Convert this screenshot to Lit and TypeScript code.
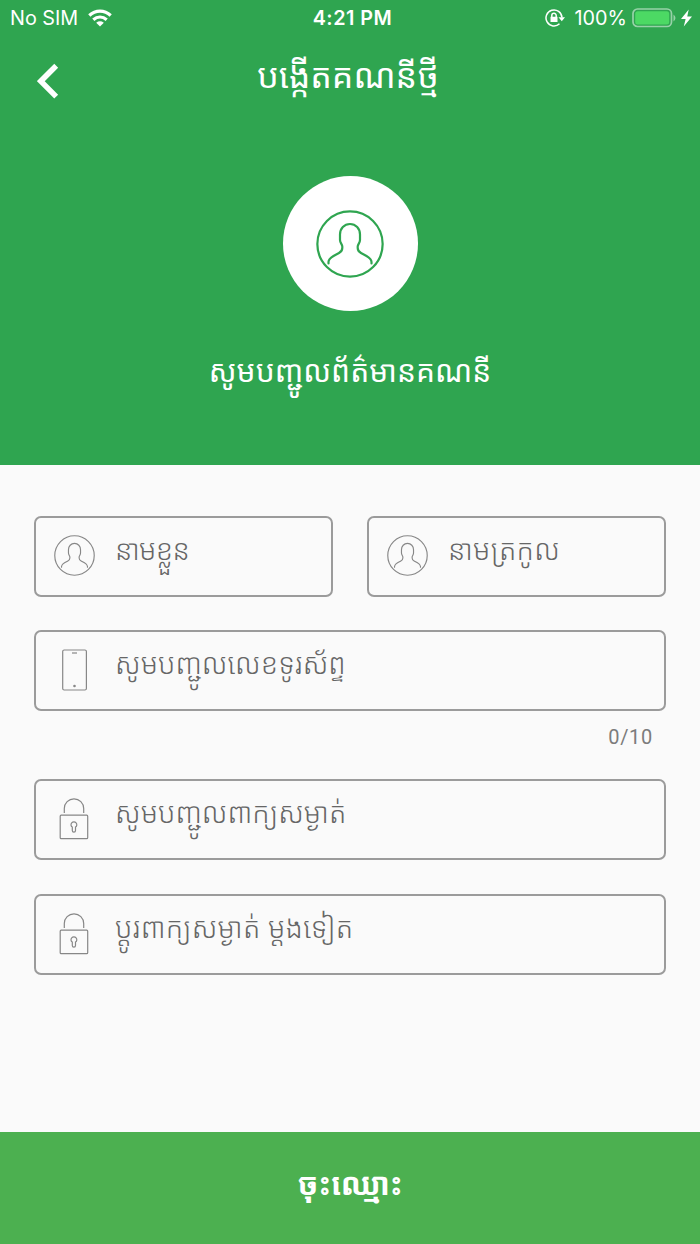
import { LitElement, html, css, svg } from "lit";
import { customElement, property } from "lit/decorators.js";

const person = (w: number) => svg`
  <circle cx="34" cy="34" r="${33.2 - w / 4}" stroke-width="${w}"></circle>
  <path stroke-width="${w}" stroke-linecap="round" d="M12.500 53.500V52C12.500 49 15 47.500 17.500 46L23 43C25.300 41.700 26.300 40.500 26.300 38V36.500C26.300 34.500 24 33 24 30V24.500C24 18.500 28.200 14 34 14S44 18.500 44 24.500V30C44 33 41.700 34.500 41.700 36.500V38C41.700 40.500 42.700 41.700 45 43L50.500 46C53 47.500 55.500 49 55.500 52V53.500"></path>`;

@customElement("field-box")
class FieldBox extends LitElement {
  @property() icon = "person";
  @property() text = "";
  static styles = css`
    :host { display: flex; box-sizing: border-box; height: 81px; border: 2px solid #9b9b9b; border-radius: 7px; flex: 1; min-width: 0; }
    .icon { width: 41px; height: 41px; margin: 17px 20px 0 18px; flex: none; fill: none; stroke: #878787; overflow: visible; }
    .text { color: #666; font: 300 28.3px/40px "Noto Sans Khmer", "Khmer OS", "Noto Sans", sans-serif; padding-top: 11px; white-space: nowrap; }
    :host(.tight) .text { letter-spacing: -.7px; }
    :host(.wide) .text { letter-spacing: .2px; }
  `;
  glyph() {
    if (this.icon === "person") return html`<svg class="icon" viewBox="0 0 68 68">${person(1.9)}</svg>`;
    if (this.icon === "phone")
      return html`<svg class="icon" viewBox="0 0 41 41" stroke-width="1.200">
        <rect x="8.700" y="1" width="23.700" height="40" rx="1.500"></rect>
        <path d="M18 4h5"></path><circle cx="20.500" cy="37" r=".7" fill="#878787"></circle>
      </svg>`;
    return html`<svg class="icon" viewBox="0 0 41 41" stroke-width="1.200">
      <rect x="6.200" y="17.200" width="27.500" height="23.500" rx="1"></rect>
      <path d="M10.300 15V10.500a9.700 9.700 0 0 1 19.400 0V15"></path>
      <path d="M18.300 29.100a2.900 2.900 0 1 1 3.200 0V32.500a1.600 1.600 0 0 1-3.200 0z"></path>
    </svg>`;
  }
  render() {
    return html`${this.glyph()}<div class="text">${this.text}</div>`;
  }
}

@customElement("app-root")
class AppRoot extends LitElement {
  static styles = css`
    :host { display: flex; flex-direction: column; width: 700px; height: 1244px; background: #fafafa; overflow: hidden; font-family: "Noto Sans Khmer", "Khmer OS", "Noto Sans", sans-serif; }
    .header { height: 465px; background: #2fa550; color: #fff; display: flex; flex-direction: column; align-items: center; flex: none; }
    .status { width: 100%; height: 36px; box-sizing: border-box; padding: 0 8px 0 10px; display: grid; grid-template-columns: 1fr auto 1fr; align-items: center; font: 19.8px/36px Inter, sans-serif; }
    .left, .right { display: flex; align-items: center; }
    .right { justify-content: flex-end; }
    .wifi { margin: -1px 0 0 10px; }
    .time { font-weight: 600; letter-spacing: .5px; padding-left: 3px; }
    .lock { margin-right: 10px; }
    .battery { margin-left: 5px; }
    .bolt { margin-left: 5px; }
    .nav { width: 100%; height: 90px; display: grid; grid-template-columns: 100px 1fr 100px; }
    .back { margin: 27px 0 0 37px; }
    .title { text-align: center; font-size: 34px; line-height: 48px; padding: 15px 4px 0 0; white-space: nowrap; }
    .avatar { margin-top: 50px; width: 135px; height: 135px; border-radius: 50%; background: #fff; display: grid; place-items: center; }
    .avatar svg { fill: none; stroke: #2fa550; }
    .subtitle { margin-top: 36px; font-size: 30px; line-height: 48px; white-space: nowrap; }
    .form { flex: 1; padding: 51px 34px 0; display: flex; flex-direction: column; }
    .pair { display: flex; gap: 34px; margin-bottom: 33px; }
    field-box { flex: none; }
    .pair field-box { flex: 1; }
    .count { box-sizing: border-box; text-align: right; padding: 14px 13px 0 0; color: #7c7c7c; font: 20px/24px Roboto, sans-serif; letter-spacing: .7px; height: 68px; }
    .gap { margin-bottom: 34px; }
    .submit { height: 112px; background: #4cb050; color: #fff; font: 700 31px/48px "Noto Sans Khmer", "Khmer OS", "Noto Sans", sans-serif; border: 0; padding: 0 0 10px; flex: none; }
  `;
  render() {
    return html`
      <header class="header">
        <div class="status">
          <div class="left"><span>No SIM</span>
            <svg class="wifi" width="24" height="18" viewBox="0 0 24 18" fill="none" stroke="#fff" stroke-width="3.200">
              <path d="M1.300 6.500C7.500.7 16.500.7 22.700 6.500M5.300 10.800C9.300 7.300 14.700 7.300 18.700 10.800"></path>
              <path fill="#fff" stroke="none" d="M12 17.500 8.200 13.800Q12 10.900 15.800 13.800Z"></path>
            </svg>
          </div>
          <div class="time">4:21 PM</div>
          <div class="right">
            <svg class="lock" width="20" height="18" viewBox="0 0 20 18" fill="none" stroke="#fff" stroke-width="1.500">
              <path d="M14.500 14.800A8 8 0 1 1 17 8.500"></path>
              <path fill="#fff" stroke="none" d="M13.500 8.200H20L16.800 12.200ZM5.500 7.800h7v5.200h-7z"></path>
              <path d="M6.800 8V6.500a2.200 2.200 0 0 1 4.400 0V8"></path>
            </svg>
            <span>100%</span>
            <svg class="battery" width="44" height="20" viewBox="0 0 44 20">
              <rect x="1" y="1" width="38.500" height="17.500" rx="4.500" fill="none" stroke="#fff" stroke-opacity=".5" stroke-width="1.700"></rect>
              <rect x="3.200" y="3.200" width="34" height="13.200" rx="2.500" fill="#4cd964"></rect>
              <path d="M41.500 6.500q4 3.500 0 7z" fill="#fff" opacity=".5"></path>
            </svg>
            <svg class="bolt" width="11" height="18" viewBox="0 0 10 18" preserveAspectRatio="none"><path fill="#fff" d="M7 .5 0 10h4.200L2.500 17.500 10 7.500H5.700z"></path></svg>
          </div>
        </div>
        <div class="nav">
          <svg class="back" width="22" height="36" viewBox="0 0 22 36" fill="none" stroke="#fff" stroke-width="5.500"><path d="M19.200 2.800 3.800 18.200 19.200 33.600"></path></svg>
          <div class="title">បង្កើតគណនីថ្មី</div>
        </div>
        <div class="avatar"><svg width="68" height="68" viewBox="0 0 68 68">${person(2.2)}</svg></div>
        <div class="subtitle">សូមបញ្ជូលព័ត៌មានគណនី</div>
      </header>
      <main class="form">
        <div class="pair">
          <field-box class="tight" icon="person" text="នាមខ្លួន"></field-box>
          <field-box class="wide" icon="person" text="នាមត្រកូល"></field-box>
        </div>
        <field-box icon="phone" text="សូមបញ្ជូលលេខទូរស័ព្ទ"></field-box>
        <div class="count">0/10</div>
        <field-box class="gap" icon="lock" text="សូមបញ្ជូលពាក្យសម្ងាត់"></field-box>
        <field-box class="wide" icon="lock" text="ប្តូរពាក្យសម្ងាត់ ម្តងទៀត"></field-box>
      </main>
      <button class="submit">ចុះឈ្មោះ</button>
    `;
  }
}
